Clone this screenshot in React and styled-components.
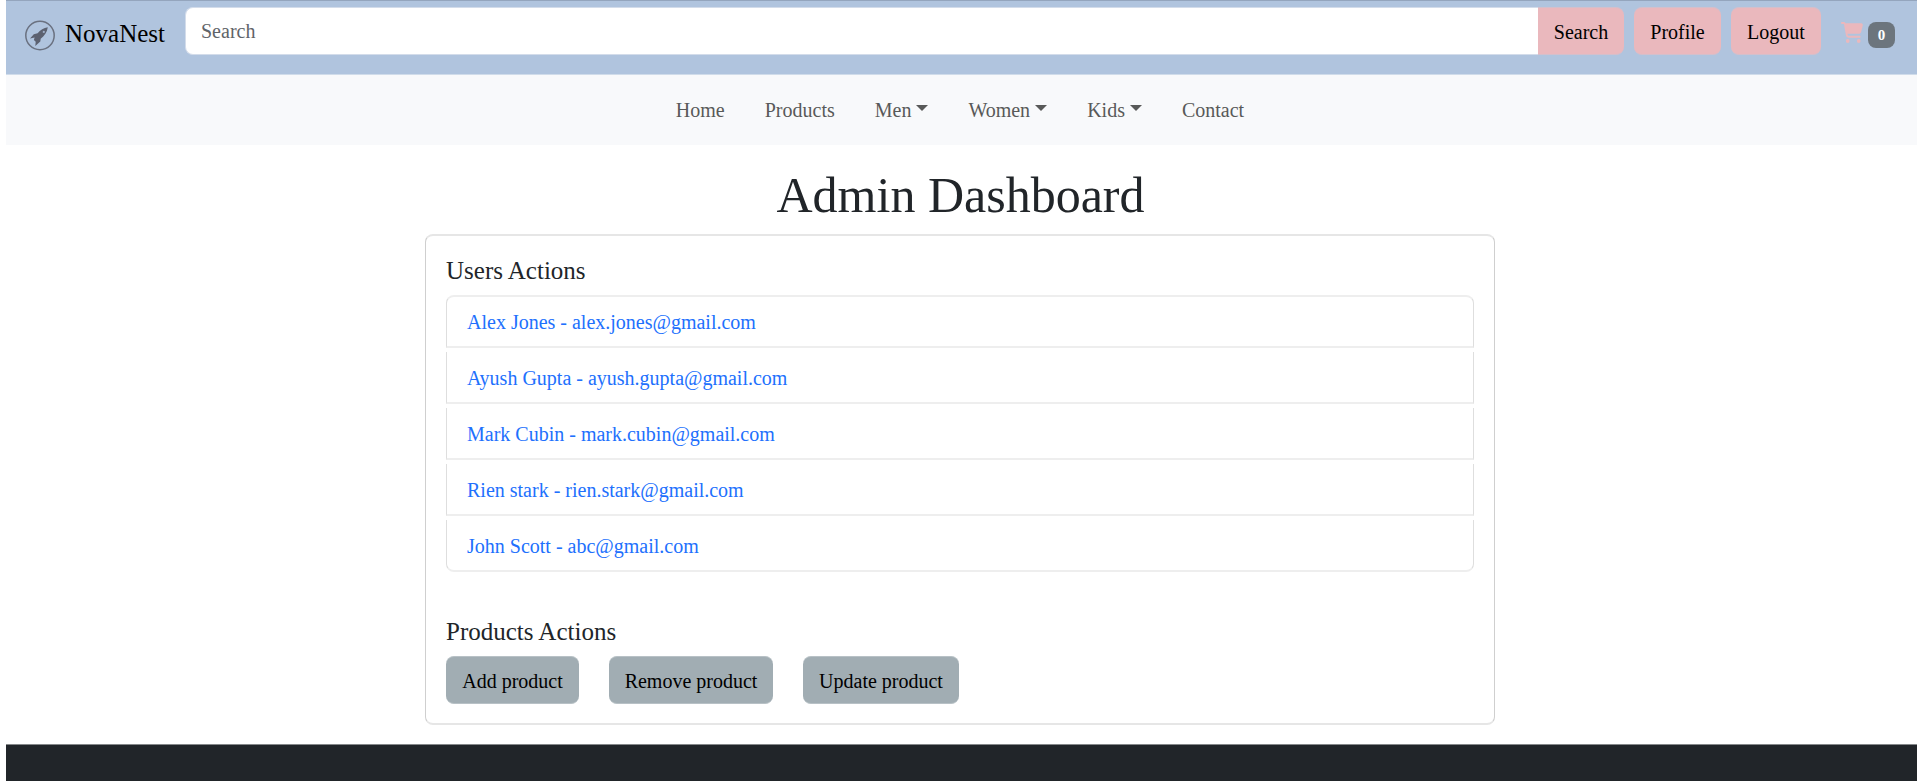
import React from 'react';
import styled, { createGlobalStyle } from 'styled-components';

const GlobalStyle = createGlobalStyle`
  *, *::before, *::after { box-sizing: border-box; }
  body {
    margin: 0;
    background: #fff;
    color: #212529;
    font-family: "Liberation Serif", "Times New Roman", serif;
    font-size: 20px;
    line-height: 30px;
  }
  button, input { font: inherit; }
`;

const Page = styled.div`
  display: flex;
  flex-direction: column;
  height: 781px;
  padding-left: 6px;
  overflow: hidden;
`;

const TopBar = styled.header`
  display: flex;
  align-items: flex-start;
  height: 75px;
  padding: 6px 22px 0 19px;
  border-top: 1px solid #94a5bd;
  border-bottom: 1px solid #d0dcea;
  background: #b0c4de;
`;

const Brand = styled.a`
  display: flex;
  width: 160px;
  gap: 10px;
  padding-top: 7px;
  color: #000;
  font-size: 25px;
  line-height: 38px;

  svg { margin-top: 6px; }
  span { margin-top: 1px; }
`;

const SearchForm = styled.form`
  display: flex;
  flex: 1;
  margin-right: 10px;
`;

const SearchInput = styled.input`
  flex: 1;
  min-width: 0;
  height: 48px;
  padding: 1px 15px 0;
  border: 1px solid #d3dcea;
  border-right: 0;
  border-radius: 8px 0 0 8px;
  background: #fff;
  outline: 0;

  &::placeholder { color: #5f6469; opacity: 1; }
`;

const PinkButton = styled.button`
  width: ${(p) => p.$width}px;
  height: 48px;
  margin-right: ${(p) => p.$gap || 0}px;
  padding: 1px 0 0;
  border: solid #d4bfcb;
  border-width: 1px 0;
  border-radius: ${(p) => (p.$joined ? '0 8px 8px 0' : '8px')};
  background: #eab8bd;
  color: #000;
`;

const Cart = styled.a`
  display: flex;
  gap: 5px;
  padding-top: 15px;
`;

const Badge = styled.span`
  width: 27px;
  height: 26px;
  border-radius: 8px;
  background: #6c757d;
  color: #fff;
  font-size: 15px;
  font-weight: 700;
  line-height: 26px;
  text-align: center;
`;

const NavBar = styled.nav`
  display: flex;
  justify-content: center;
  gap: 40px;
  height: 70px;
  padding: 20px 3px 0 0;
  background: #f8f9fb;
`;

const NavLink = styled.a`
  display: flex;
  gap: 5px;
  color: #585959;
`;

const Caret = styled.span`
  width: 12px;
  height: 6px;
  margin-top: 10px;
  border: 6px solid transparent;
  border-top-color: #585959;
  border-bottom: 0;
`;

const Title = styled.h1`
  margin: 20px 0 9px;
  padding-right: 2px;
  font-size: 50px;
  font-weight: 400;
  line-height: 60px;
  text-align: center;
`;

const Card = styled.main`
  width: 1070px;
  height: 491px;
  margin-left: 419px;
  padding: 20px 20px 0;
  border: solid;
  border-width: 2px 1px;
  border-color: #e6e6e6 #cfcfcf;
  border-radius: 8px;
`;

const SectionTitle = styled.h2`
  margin: 0 0 9px;
  font-size: 25px;
  font-weight: 400;
  line-height: 30px;
`;

const UserList = styled.ul`
  margin: 0 0 45px;
  padding: 0;
  list-style: none;
`;

const UserRow = styled.li`
  height: 52px;
  margin-bottom: 4px;
  padding: 8px 20px 0;
  border: solid;
  border-width: 0 1px 2px;
  border-color: #eee #dedede;

  &:first-child {
    height: 53px;
    padding-top: 7px;
    border-top-width: 2px;
    border-radius: 8px 8px 0 0;
  }
  &:last-child {
    margin-bottom: 0;
    border-radius: 0 0 8px 8px;
  }
`;

const UserLink = styled.a`
  display: block;
  padding-top: 3px;
  color: #2170fd;
`;

const Actions = styled.div`
  display: flex;
  gap: 30px;
`;

const ActionButton = styled.button`
  width: ${(p) => p.$width}px;
  height: 48px;
  padding: 1px 0 0;
  border: solid #b8c1c6;
  border-width: 1px 0;
  border-radius: 8px;
  background: #a1adb3;
  color: #000;
`;

const Footer = styled.footer`
  flex: 1;
  margin-top: 19px;
  border-top: 1px solid #85888a;
  background: #212529;
`;

const RocketLogo = () => (
  <svg width="30" height="31" viewBox="0 0 30 31">
    <circle cx="15" cy="15.5" r="14.2" fill="none" stroke="#6a7180" strokeWidth="1.5" />
    <path
      d="M22.8 7.2C18.7 7.7 15.3 9.8 12.6 13.2L8.8 14.2L5 18.5L9.6 17.5L8.9 20.1L10.7 21.7L10.3 26L15.3 21.6L15.7 18.8C19.3 16 22.2 12 22.8 7.2Z"
      fill="#5c6170"
    />
    <circle cx="18.8" cy="11.9" r="1.1" fill="#9eafc8" />
  </svg>
);

const CartIcon = () => (
  <svg width="22" height="21" viewBox="0 0 576 512" preserveAspectRatio="none" fill="#eab8bd">
    <path d="M0 24C0 10.700 10.700 0 24 0H69.500c22 0 41.500 12.800 50.600 32h411c26.300 0 45.500 25 38.600 50.400l-41 152.300c-8.500 31.400-37 53.300-69.500 53.300H170.700l5.400 28.500c2.200 11.300 12.100 19.500 23.600 19.500H488c13.300 0 24 10.700 24 24s-10.700 24-24 24H199.700c-34.600 0-64.300-24.600-70.700-58.500L77.400 54.500c-.7-3.800-4-6.500-7.900-6.500H24C10.700 48 0 37.300 0 24zM128 464a48 48 0 1 1 96 0 48 48 0 1 1-96 0zm336-48a48 48 0 1 1 0 96 48 48 0 1 1 0-96z" />
  </svg>
);

const links = [
  { label: 'Home' },
  { label: 'Products' },
  { label: 'Men', menu: true },
  { label: 'Women', menu: true },
  { label: 'Kids', menu: true },
  { label: 'Contact' },
];

const users = [
  ['Alex Jones', 'alex.jones@gmail.com'],
  ['Ayush Gupta', 'ayush.gupta@gmail.com'],
  ['Mark Cubin', 'mark.cubin@gmail.com'],
  ['Rien stark', 'rien.stark@gmail.com'],
  ['John Scott', 'abc@gmail.com'],
];

export default function App() {
  return (
    <>
      <GlobalStyle />
      <Page>
        <TopBar>
          <Brand>
            <RocketLogo />
            <span>NovaNest</span>
          </Brand>
          <SearchForm>
            <SearchInput placeholder="Search" />
            <PinkButton type="button" $width={86} $joined>Search</PinkButton>
          </SearchForm>
          <PinkButton $width={87} $gap={10}>Profile</PinkButton>
          <PinkButton $width={90} $gap={20}>Logout</PinkButton>
          <Cart>
            <CartIcon />
            <Badge>0</Badge>
          </Cart>
        </TopBar>
        <NavBar>
          {links.map((link) => (
            <NavLink key={link.label}>
              {link.label}
              {link.menu && <Caret />}
            </NavLink>
          ))}
        </NavBar>
        <Title>Admin Dashboard</Title>
        <Card>
          <SectionTitle>Users Actions</SectionTitle>
          <UserList>
            {users.map(([name, email]) => (
              <UserRow key={email}>
                <UserLink>{`${name} - ${email}`}</UserLink>
              </UserRow>
            ))}
          </UserList>
          <SectionTitle>Products Actions</SectionTitle>
          <Actions>
            <ActionButton $width={133}>Add product</ActionButton>
            <ActionButton $width={164}>Remove product</ActionButton>
            <ActionButton $width={156}>Update product</ActionButton>
          </Actions>
        </Card>
        <Footer />
      </Page>
    </>
  );
}
